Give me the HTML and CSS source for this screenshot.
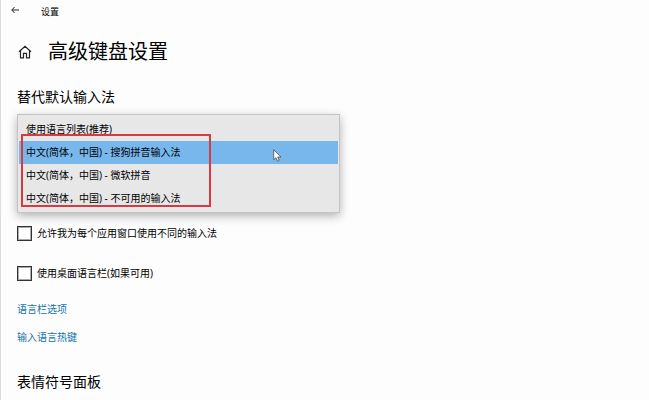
FILE: index.html
```html
<!DOCTYPE html>
<html lang="zh-CN">
<head>
  <meta charset="UTF-8">
  <meta name="viewport" content="width=device-width, initial-scale=1.0">
  <title>设置</title>
  <link rel="stylesheet" href="styles.css">
</head>
<body>
  <header class="titlebar">
    <button type="button" class="back" aria-label="返回">
      <svg width="8" height="8" viewBox="0 0 8 8"><path d="M3.6 1L.8 4l2.8 3M.8 4H8"/></svg>
    </button>
    <span class="app-name">设置</span>
  </header>
  <main class="page">
    <div class="page-head">
      <svg class="home" width="14" height="14" viewBox="0 0 14 14"><path d="M1 6.8L7 1.2l6 5.6M2.5 5.6v7.2h3V8.4h3v4.4h3V5.6"/></svg>
      <h1>高级键盘设置</h1>
    </div>

    <h2 id="ime-title">替代默认输入法</h2>
    <div class="dropdown">
      <select class="ime-list" size="4" aria-labelledby="ime-title">
        <option>使用语言列表(推荐)</option>
        <option selected>中文(简体，中国) - 搜狗拼音输入法</option>
        <option>中文(简体，中国) - 微软拼音</option>
        <option>中文(简体，中国) - 不可用的输入法</option>
      </select>
      <div class="marker"></div>
      <svg class="cursor" width="9" height="13" viewBox="0 0 8 12"><path d="M.5.7v9.2l2.1-1.9 1.4 3.3 1.6-.7-1.4-3.2h3z"/></svg>
    </div>

    <label class="check"><input type="checkbox">允许我为每个应用窗口使用不同的输入法</label>
    <label class="check"><input type="checkbox">使用桌面语言栏(如果可用)</label>

    <nav class="links">
      <a href="#">语言栏选项</a>
      <a href="#">输入语言热键</a>
    </nav>

    <h2>表情符号面板</h2>
  </main>
</body>
</html>
```

FILE: styles.css
```css
* { box-sizing: border-box; }
body {
  margin: 0;
  min-height: 100vh;
  border-left: 1px solid #dcdcdc;
  background: #fdfdfd;
  color: #000;
  font: 10px/16px "Noto Sans", "Noto Sans CJK SC", sans-serif;
}
svg { display: block; fill: none; stroke: #222; }

.titlebar { display: flex; align-items: center; gap: 22px; height: 24px; padding-left: 10px; }
.back { padding: 0; margin-bottom: 4px; border: 0; background: none; }
.app-name { font-size: 9px; }

.page { padding: 13px 16px 0; }
.page-head { display: flex; align-items: center; gap: 16px; margin-bottom: 19px; }
.home { margin-left: 1px; stroke-width: 1.2; }
h1 { margin: 0; font-size: 20px; line-height: 30px; font-weight: 400; }
h2 { margin: 0; font-size: 14px; line-height: 22px; font-weight: 400; }

.dropdown { position: relative; width: 53%; max-width: 323px; margin: 6px 0 12px; }
.ime-list {
  display: block;
  width: 100%;
  height: auto;
  padding: 3px 1px 2px;
  border: 1px solid #c4c4c4;
  border-radius: 0;
  outline: none;
  overflow: hidden;
  background: #e8e7e8;
  color: #000;
  font: inherit;
  box-shadow: 0 3px 9px rgba(0, 0, 0, 0.3);
}
.ime-list option { min-height: 23px; padding: 3px 7px 4px; line-height: 16px; color: #000; }
.ime-list option:checked { background: linear-gradient(#78b7ec, #78b7ec); color: #000; }

/* red frame around the installed input methods */
.marker { position: absolute; left: 4px; top: 20px; width: 190px; height: 73px; border: 2px solid #d93a40; pointer-events: none; }
.cursor { position: absolute; left: 256px; top: 35px; fill: #fff; stroke: #555; stroke-width: 0.8; }

.check { display: flex; align-items: center; gap: 5px; height: 16px; }
.check + .check { margin-top: 24px; }
.check input { appearance: none; width: 15px; height: 15px; margin: 0; border: 1px solid #333; background: #fff; box-shadow: inset 0 0 0 1px #aaa; }

.links { display: flex; flex-direction: column; align-items: flex-start; gap: 12px; margin: 20px 0 26px; }
.links a { color: #1672b0; text-decoration: none; }
```
